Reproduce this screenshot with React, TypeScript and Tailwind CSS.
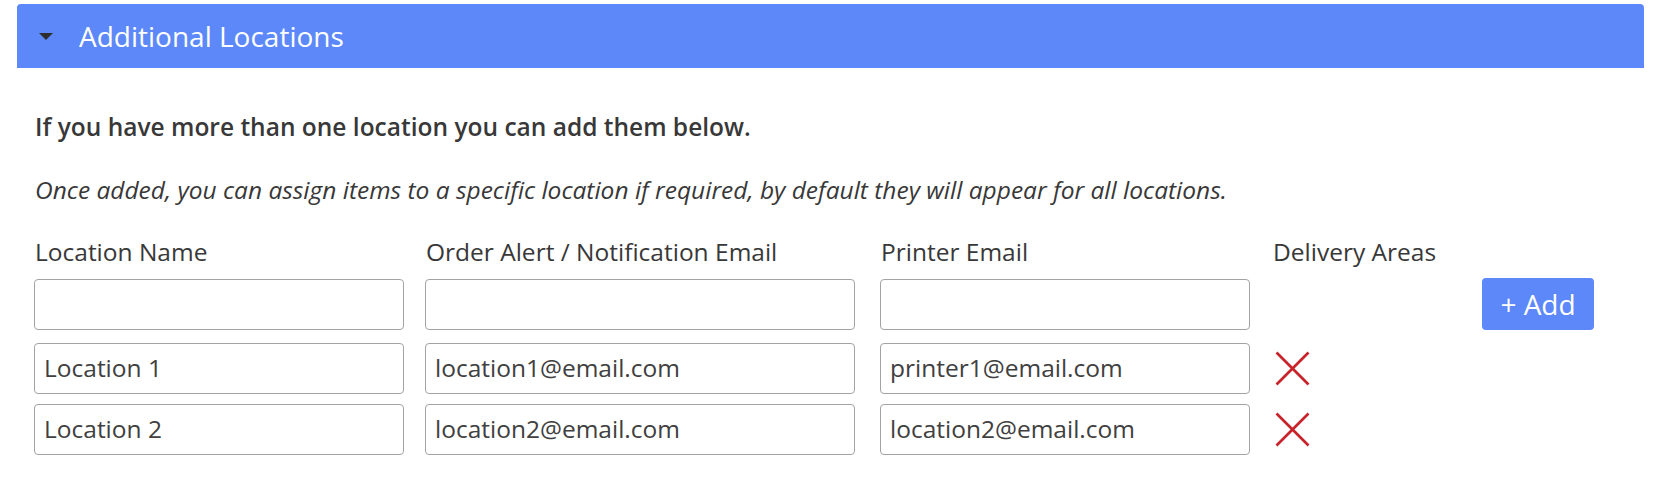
import React from "react";

const font = { fontFamily: '"Open Sans", "Liberation Sans", sans-serif' };

function XIcon() {
  return (
    <svg width="35" height="35" viewBox="0 0 35 35" className="block">
      <line x1="1.5" y1="1.5" x2="33.5" y2="33.5" stroke="#c8232b" strokeWidth="2.7" />
      <line x1="33.5" y1="1.5" x2="1.5" y2="33.5" stroke="#c8232b" strokeWidth="2.7" />
    </svg>
  );
}

function Field({ w, value }: { w: string; value?: string }) {
  return (
    <div
      className={`${w} h-[51px] shrink-0 rounded-[4px] border border-[#a3a3a3] bg-white flex items-center pl-[9px] text-[24.5px] text-[#404040]`}
    >
      {value}
    </div>
  );
}

function Row({ a, b, c, action }: { a?: string; b?: string; c?: string; action: React.ReactNode }) {
  return (
    <div className="flex items-center">
      <Field w="w-[370px]" value={a} />
      <div className="ml-[21px]"><Field w="w-[430px]" value={b} /></div>
      <div className="ml-[25px]"><Field w="w-[370px]" value={c} /></div>
      {action}
    </div>
  );
}

export default function App() {
  return (
    <div className="w-[1662px] h-[484px] bg-white text-[#383838] pl-[17px] pr-[18px] pt-[4px]" style={font}>
      <div className="h-[64px] bg-[#5c88fa] rounded-t-[4px] flex items-center pl-[22px]">
        <svg width="14" height="7" viewBox="0 0 14 7" className="block">
          <polygon points="0,0 14,0 7,7" fill="#2e2e2e" />
        </svg>
        <span className="ml-[26px] text-[28px] text-white leading-none">Additional Locations</span>
      </div>
      <div className="pl-[17px]">
        <p className="mt-[43px] text-[24.5px] font-semibold leading-[32px] pl-[1px]">
          If you have more than one location you can add them below.
        </p>
        <p className="mt-[31px] text-[24.5px] italic leading-[32px] pl-[1px]">
          Once added, you can assign items to a specific location if required, by default they will appear for all locations.
        </p>
        <div className="mt-[30px] flex text-[24.5px] leading-[32px] pl-[1px]">
          <div className="w-[391px]">Location Name</div>
          <div className="w-[455px]">Order Alert / Notification Email</div>
          <div className="w-[392px]">Printer Email</div>
          <div>Delivery Areas</div>
        </div>
        <div className="mt-[10px] flex flex-col gap-[10px]">
          <Row
            action={
              <button className="ml-[232px] h-[52px] w-[112px] rounded-[4px] bg-[#5c88fa] text-white text-[28px] flex items-center justify-center">
                + Add
              </button>
            }
          />
          <div className="mt-[3px]">
            <Row a="Location 1" b="location1@email.com" c="printer1@email.com" action={<div className="ml-[25px]"><XIcon /></div>} />
          </div>
          <Row a="Location 2" b="location2@email.com" c="location2@email.com" action={<div className="ml-[25px]"><XIcon /></div>} />
        </div>
      </div>
    </div>
  );
}
